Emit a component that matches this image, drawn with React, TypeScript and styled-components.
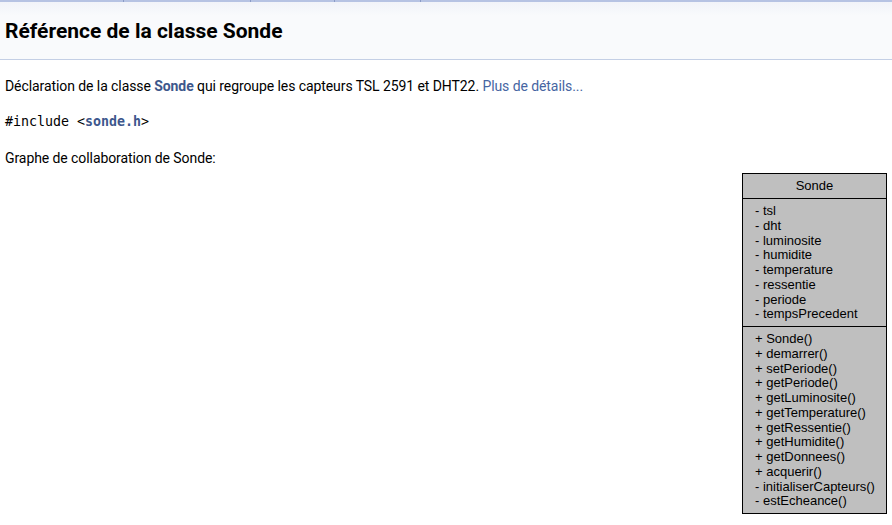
import React from "react";
import styled, { createGlobalStyle } from "styled-components";

const Global = createGlobalStyle`
  html, body { margin: 0; padding: 0; background: #ffffff; }
  body { font-family: Roboto, "Liberation Sans", sans-serif; color: #000000; }
`;

const Page = styled.div`
  width: 892px;
  min-height: 525px;
  display: flex;
  flex-direction: column;
`;

const NavRow = styled.div`
  display: flex;
  height: 2px;
  background: #b6c3e3;
`;

const NavTab = styled.div<{ $w: number }>`
  width: ${(p) => p.$w}px;
  height: 2px;
  border-right: 1px solid #8a9bc6;
  box-sizing: border-box;
`;

const Header = styled.div`
  height: 57px;
  background: linear-gradient(to bottom, #f1f3f9 0px, #f9fafc 14px, #f9fafc 100%);
  border-bottom: 1px solid #c4cfe5;
  display: flex;
  align-items: center;
  padding-left: 5px;
`;

const Title = styled.div`
  font-family: Roboto, sans-serif;
  font-weight: 700;
  font-size: 21px;
  color: #000000;
`;

const Contents = styled.div`
  padding: 0 5px;
  display: flex;
  flex-direction: column;
`;

const Para = styled.p`
  font-family: Roboto, sans-serif;
  font-size: 14px;
  letter-spacing: -0.08px;
  line-height: 18px;
  margin: 0;
`;

const Brief = styled(Para)`
  margin-top: 17px;
`;

const Include = styled.p`
  font-family: "DejaVu Sans Mono", monospace;
  font-size: 13.3px;
  line-height: 18px;
  margin: 18px 0 0 0;
`;

const Collab = styled(Para)`
  margin-top: 18px;
`;

const ElLink = styled.a`
  color: #3d578c;
  font-weight: 700;
  text-decoration: none;
`;

const Link = styled.a`
  color: #4665a2;
  text-decoration: none;
`;

const GraphArea = styled.div`
  display: flex;
  justify-content: flex-end;
  margin-top: 6px;
`;

const UmlBox = styled.div`
  width: 143px;
  border: 1px solid #000000;
  background: #bfbfbf;
  font-family: "Liberation Sans", Arial, sans-serif;
  font-size: 13px;
  color: #000000;
  display: flex;
  flex-direction: column;
`;

const UmlName = styled.div`
  height: 24px;
  line-height: 23px;
  text-align: center;
  border-bottom: 1px solid #000000;
`;

const UmlSection = styled.div<{ $last?: boolean }>`
  padding: 5px 0 4px 12px;
  border-bottom: ${(p) => (p.$last ? "none" : "1px solid #000000")};
  display: flex;
  flex-direction: column;
`;

const UmlLine = styled.div`
  height: 14.75px;
  line-height: 14.75px;
  flex-shrink: 0;
  white-space: pre;
`;

const attrs = [
  "- tsl",
  "- dht",
  "- luminosite",
  "- humidite",
  "- temperature",
  "- ressentie",
  "- periode",
  "- tempsPrecedent",
];

const methods = [
  "+ Sonde()",
  "+ demarrer()",
  "+ setPeriode()",
  "+ getPeriode()",
  "+ getLuminosite()",
  "+ getTemperature()",
  "+ getRessentie()",
  "+ getHumidite()",
  "+ getDonnees()",
  "+ acquerir()",
  "- initialiserCapteurs()",
  "- estEcheance()",
];

export default function App() {
  return (
    <Page>
      <Global />
      <NavRow>
        <NavTab $w={124} />
        <NavTab $w={127} />
        <NavTab $w={84} />
        <NavTab $w={86} />
      </NavRow>
      <Header>
        <Title>Référence de la classe Sonde</Title>
      </Header>
      <Contents>
        <Brief>
          Déclaration de la classe <ElLink href="#">Sonde</ElLink> qui regroupe les capteurs TSL 2591 et DHT22.{" "}
          <Link href="#">Plus de détails...</Link>
        </Brief>
        <Include>
          #include &lt;<ElLink href="#">sonde.h</ElLink>&gt;
        </Include>
        <Collab>Graphe de collaboration de Sonde:</Collab>
        <GraphArea>
          <UmlBox>
            <UmlName>Sonde</UmlName>
            <UmlSection>
              {attrs.map((a) => (
                <UmlLine key={a}>{a}</UmlLine>
              ))}
            </UmlSection>
            <UmlSection $last>
              {methods.map((m) => (
                <UmlLine key={m}>{m}</UmlLine>
              ))}
            </UmlSection>
          </UmlBox>
        </GraphArea>
      </Contents>
    </Page>
  );
}
